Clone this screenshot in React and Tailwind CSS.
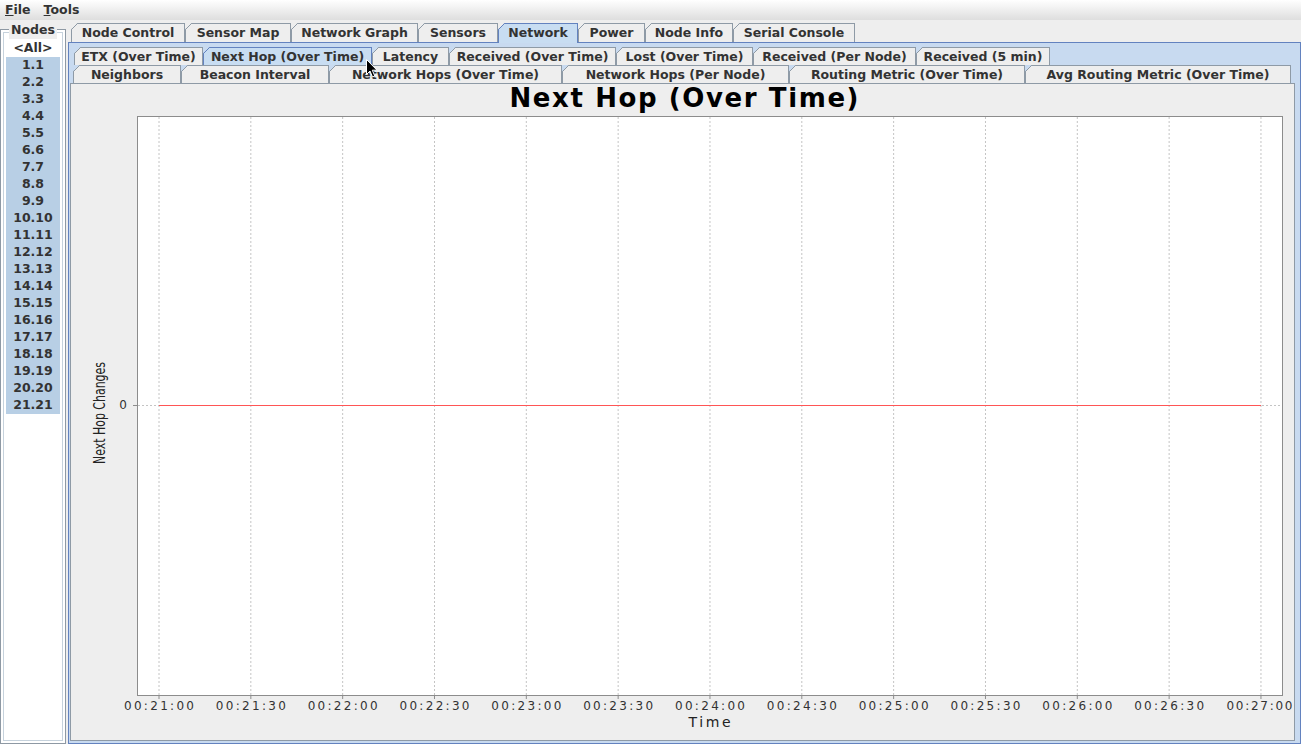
import clsx from "clsx";

const topTabs = [
  { label: "Node Control", w: "w-[114px]" },
  { label: "Sensor Map", w: "w-[106px]" },
  { label: "Network Graph", w: "w-[127px]" },
  { label: "Sensors", w: "w-[80px]" },
  { label: "Network", w: "w-[80px]", selected: true },
  { label: "Power", w: "w-[67px]" },
  { label: "Node Info", w: "w-[88px]" },
  { label: "Serial Console", w: "w-[122px]" },
];

const rowOne = [
  { label: "ETX (Over Time)", w: "w-[129px]" },
  { label: "Next Hop (Over Time)", w: "w-[169px]", selected: true },
  { label: "Latency", w: "w-[77px]" },
  { label: "Received (Over Time)", w: "w-[167px]" },
  { label: "Lost (Over Time)", w: "w-[137px]" },
  { label: "Received (Per Node)", w: "w-[163px]" },
  { label: "Received (5 min)", w: "w-[134px]" },
];

const rowTwo = [
  { label: "Neighbors", w: "w-[108px]" },
  { label: "Beacon Interval", w: "w-[148px]" },
  { label: "Network Hops (Over Time)", w: "w-[233px]" },
  { label: "Network Hops (Per Node)", w: "w-[227px]" },
  { label: "Routing Metric (Over Time)", w: "w-[236px]" },
  { label: "Avg Routing Metric (Over Time)", w: "w-[266px]" },
];

const nodes = Array.from({ length: 21 }, (_, i) => `${i + 1}.${i + 1}`);

const times = [
  "00:21:00", "00:21:30", "00:22:00", "00:22:30", "00:23:00", "00:23:30", "00:24:00",
  "00:24:30", "00:25:00", "00:25:30", "00:26:00", "00:26:30", "00:27:00",
];

function Tab({ tab, behind, top }) {
  return (
    <div
      className={clsx(
        "relative flex shrink-0 items-center justify-center border-l border-r border-t",
        tab.w,
        tab.selected ? "border-[#6382bf] bg-[#c8ddf2]" : "border-[#8e9aa6] bg-[#eeeeee]",
        top ? (tab.selected ? "z-10 -mb-px h-[20px]" : "h-[19px]") : "h-[18px]"
      )}
    >
      <svg className="absolute -left-px -top-px" width="7" height="7">
        <polygon points="0,0 6.5,0 0,6.5" fill={behind} />
        <line x1="0.5" y1="6.5" x2="6.5" y2="0.5" stroke={tab.selected ? "#6382bf" : "#8e9aa6"} />
      </svg>
      <span className={clsx("whitespace-nowrap", !top && "pt-[2px]")}>{tab.label}</span>
    </div>
  );
}

function Chart() {
  const xs = times.map((_, i) => 159 + i * 91.83);
  return (
    <svg width="1222" height="655" viewBox="71 84 1222 655" className="block">
      <text x="684" y="107" textAnchor="middle" fontSize="26" fontWeight="bold" fill="#000"
        textLength="349" lengthAdjust="spacing">
        Next Hop (Over Time)
      </text>
      <rect x="137.5" y="116.5" width="1145" height="579" fill="#fff" stroke="#8c8c8c" />
      {xs.map((x) => (
        <g key={x}>
          <line x1={x} y1="117" x2={x} y2="695" stroke="#c4c4c4" strokeDasharray="2 2" />
          <line x1={x} y1="696" x2={x} y2="699" stroke="#8c8c8c" />
        </g>
      ))}
      <line x1="138" y1="405.5" x2="1282" y2="405.5" stroke="#c4c4c4" strokeDasharray="2 2" />
      <line x1="133" y1="405.5" x2="137" y2="405.5" stroke="#8c8c8c" />
      {/* series line */}
      <rect x="159" y="405" width="1102" height="1" fill="#ff5555" />
      <text x="127" y="409" textAnchor="end" fontSize="12" fill="#333">0</text>
      {times.map((t, i) => {
        const last = i === times.length - 1;
        return (
          <text key={t} x={last ? 1259.5 : xs[i]} y="709.5" textAnchor="middle" fontSize="12" fill="#333"
            textLength={last ? 66 : 70} lengthAdjust="spacing">
            {t}
          </text>
        );
      })}
      <text x="709.5" y="727" textAnchor="middle" fontSize="14" fill="#222"
        textLength="42" lengthAdjust="spacing">
        Time
      </text>
      <text transform="translate(104.5 413) rotate(-90)" textAnchor="middle" fontSize="16" fill="#222"
        textLength="102" lengthAdjust="spacingAndGlyphs">
        Next Hop Changes
      </text>
    </svg>
  );
}

export default function App() {
  return (
    <div className="relative h-[744px] w-[1301px] overflow-hidden bg-[#eeeeee] font-['DejaVu_Sans',Verdana,sans-serif] text-[12.5px] font-bold text-[#333333]">
      {/* menu bar */}
      <div className="flex h-[20px] items-center gap-[13px] bg-gradient-to-b from-white to-[#dedede] pl-[5px] text-[12.5px]">
        <span><span className="underline">F</span>ile</span>
        <span><span className="underline">T</span>ools</span>
      </div>

      <div className="flex h-[724px]">
        {/* nodes list */}
        <div className="relative mr-[2px] w-[66px] shrink-0 pt-[9px]">
          <div className="h-full border border-[#8e99a4] bg-white p-[2px]">
            <div className="h-full border border-[#c6d2dc] bg-white pt-[7px]">
              <div className="flex h-[17px] items-center justify-center">&lt;All&gt;</div>
              {nodes.map((n) => (
                <div key={n} className="mx-[2px] flex h-[17px] items-center justify-center bg-[#b8cfe5]">
                  {n}
                </div>
              ))}
            </div>
          </div>
          <div className="absolute left-0 right-0 top-[1px] flex justify-center">
            <span className="bg-[#eeeeee] px-[2px] leading-[18px]">Nodes</span>
          </div>
        </div>

        {/* main tabbed pane */}
        <div className="flex w-[1233px] flex-col">
          <div className="flex h-[22px] shrink-0 items-end pl-[3px]">
            {topTabs.map((t) => (
              <Tab key={t.label} tab={t} behind="#eeeeee" top />
            ))}
          </div>
          <div className="flex flex-1 flex-col border border-[#6382bf] bg-[#c8daf0] pb-[2px] pl-[1px] pr-[5px] pt-[4px]">
            <div className="flex h-[18px] shrink-0 pl-[4px]">
              {rowOne.map((t) => (
                <Tab key={t.label} tab={t} behind="#c8daf0" />
              ))}
            </div>
            <div className="flex h-[18px] shrink-0 pl-[3px]">
              {rowTwo.map((t) => (
                <Tab key={t.label} tab={t} behind="#c8daf0" />
              ))}
            </div>
            <div className="flex-1 overflow-hidden border border-[#8e9aa6] bg-[#eeeeee] font-normal">
              <Chart />
            </div>
          </div>
        </div>
      </div>

      {/* mouse pointer */}
      <svg className="absolute left-[366px] top-[59px]" width="13" height="20" viewBox="0 0 13 20">
        <path d="M0.5 0.5 L0.5 15.5 L4 12 L6.5 18 L8.8 17 L6.3 11.2 L11 11.2 Z" fill="#000" stroke="#fff" strokeWidth="1" />
      </svg>
    </div>
  );
}
